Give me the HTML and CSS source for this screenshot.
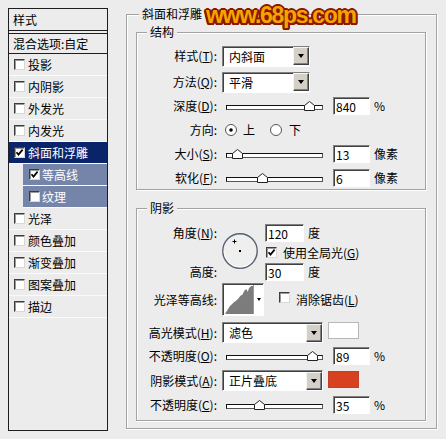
FILE: index.html
```html
<!DOCTYPE html>
<html lang="zh-CN">
<head>
<meta charset="utf-8">
<title>图层样式 - 斜面和浮雕</title>
<link rel="stylesheet" href="styles.css">
</head>
<body>
<div class="dialog">
  <div class="styles">
    <div class="styles-head">样式</div>
    <div class="blend">混合选项:自定</div>
    <div class="item"><span class="cb"></span>投影</div>
    <div class="item"><span class="cb"></span>内阴影</div>
    <div class="item"><span class="cb"></span>外发光</div>
    <div class="item"><span class="cb"></span>内发光</div>
    <div class="item sel"><span class="cb"><svg viewBox="0 0 9 9" class="chk"><polyline points="1.5,4.2 3.5,6.6 7.6,1.6"/></svg></span>斜面和浮雕</div>
    <div class="item sub"><span class="cb"><svg viewBox="0 0 9 9" class="chk"><polyline points="1.5,4.2 3.5,6.6 7.6,1.6"/></svg></span>等高线</div>
    <div class="item sub"><span class="cb"></span>纹理</div>
    <div class="item"><span class="cb"></span>光泽</div>
    <div class="item"><span class="cb"></span>颜色叠加</div>
    <div class="item"><span class="cb"></span>渐变叠加</div>
    <div class="item"><span class="cb"></span>图案叠加</div>
    <div class="item"><span class="cb"></span>描边</div>
  </div>

  <fieldset class="group outer">
    <legend>斜面和浮雕</legend>

    <fieldset class="group inner struct">
      <legend>结构</legend>
      <div class="row">
        <span class="lbl">样式(<u>T</u>):</span>
        <div class="select w88"><span class="val">内斜面</span><span class="btn"><i class="tri"></i></span></div>
      </div>
      <div class="row gap4">
        <span class="lbl">方法(<u>Q</u>):</span>
        <div class="select w88"><span class="val">平滑</span><span class="btn"><i class="tri"></i></span></div>
      </div>
      <div class="row">
        <span class="lbl">深度(<u>D</u>):</span>
        <div class="slider"><span class="track"></span><svg class="thumb" style="left:78px" viewBox="0 0 11 10"><path d="M0.5,9.5V4.5L5.5,0.5L10.5,4.5V9.5Z"/></svg></div>
        <span class="num">840</span><span class="unit">%</span>
      </div>
      <div class="row">
        <span class="lbl">方向:</span>
        <svg class="radio first" viewBox="0 0 12 12"><circle cx="6" cy="6" r="5.5" class="ring"/><circle cx="6" cy="6" r="1.8" class="dot"/></svg><span>上</span>
        <svg class="radio second" viewBox="0 0 12 12"><circle cx="6" cy="6" r="5.5" class="ring"/></svg><span>下</span>
      </div>
      <div class="row">
        <span class="lbl">大小(<u>S</u>):</span>
        <div class="slider"><span class="track"></span><svg class="thumb" style="left:6px" viewBox="0 0 11 10"><path d="M0.5,9.5V4.5L5.5,0.5L10.5,4.5V9.5Z"/></svg></div>
        <span class="num">13</span><span class="unit">像素</span>
      </div>
      <div class="row">
        <span class="lbl">软化(<u>F</u>):</span>
        <div class="slider"><span class="track"></span><svg class="thumb" style="left:31px" viewBox="0 0 11 10"><path d="M0.5,9.5V4.5L5.5,0.5L10.5,4.5V9.5Z"/></svg></div>
        <span class="num">6</span><span class="unit">像素</span>
      </div>
    </fieldset>

    <fieldset class="group inner shadow">
      <legend>阴影</legend>
      <div class="angle">
        <span class="lbl a-lbl">角度(<u>N</u>):</span>
        <svg class="dial" viewBox="0 0 36 36">
          <circle cx="18" cy="18" r="17.2" class="dial-ring"/>
          <circle cx="18" cy="18" r="16" class="dial-hi"/>
          <rect x="17" y="17" width="2" height="2"/>
          <path d="M12.5,6.5V10.5M10.5,8.5H14.5" class="cross"/>
        </svg>
        <div class="a-val"><span class="num w39">120</span><span class="unit">度</span></div>
        <div class="a-glob"><span class="cb"><svg viewBox="0 0 9 9" class="chk"><polyline points="1.5,4.2 3.5,6.6 7.6,1.6"/></svg></span><span>使用全局光(<u>G</u>)</span></div>
        <span class="lbl h-lbl">高度:</span>
        <div class="h-val"><span class="num w39">30</span><span class="unit">度</span></div>
      </div>
      <div class="row contour-row">
        <span class="lbl">光泽等高线:</span>
        <div class="contour">
          <svg class="curve" viewBox="0 0 29 29" preserveAspectRatio="none"><path d="M0,29L5,21L9,17L13,14L16,10L18,9L20,5L22,3L23.5,6L25,2L27,0L29,0L29,29Z"/></svg>
          <span class="c-btn"><i class="tri"></i></span>
        </div>
        <span class="cb aa"></span><span>消除锯齿(<u>L</u>)</span>
      </div>
      <div class="row top gap6">
        <span class="lbl">高光模式(<u>H</u>):</span>
        <div class="select w101"><span class="val">滤色</span><span class="btn"><i class="tri"></i></span></div>
        <span class="swatch white"></span>
      </div>
      <div class="row short gap2">
        <span class="lbl">不透明度(<u>O</u>):</span>
        <div class="slider"><span class="track"></span><svg class="thumb" style="left:81px" viewBox="0 0 11 10"><path d="M0.5,9.5V4.5L5.5,0.5L10.5,4.5V9.5Z"/></svg></div>
        <span class="num">89</span><span class="unit">%</span>
      </div>
      <div class="row top gap4">
        <span class="lbl">阴影模式(<u>A</u>):</span>
        <div class="select w101"><span class="val">正片叠底</span><span class="btn"><i class="tri"></i></span></div>
        <span class="swatch red"></span>
      </div>
      <div class="row short gap3">
        <span class="lbl">不透明度(<u>C</u>):</span>
        <div class="slider"><span class="track"></span><svg class="thumb" style="left:28px" viewBox="0 0 11 10"><path d="M0.5,9.5V4.5L5.5,0.5L10.5,4.5V9.5Z"/></svg></div>
        <span class="num">35</span><span class="unit">%</span>
      </div>
    </fieldset>
  </fieldset>
</div>
<div class="watermark">www.68ps.com</div>
</body>
</html>
```

FILE: styles.css
```css
* { box-sizing: border-box; }
html, body { margin: 0; padding: 0; }
body {
  width: 446px;
  height: 439px;
  background: #ececec;
  font: 12px/14px "Noto Sans CJK SC", "Noto Sans", sans-serif;
  color: #000;
  position: relative;
  overflow: hidden;
}
u { text-decoration: underline; text-underline-offset: 1px; }

.dialog { display: flex; align-items: flex-start; }

/* left style list */
.styles {
  margin: 8px 0 0 8px;
  width: 100px;
  height: 423px;
  border: 1px solid #1e1e1e;
  background: #ececec;
  flex: none;
}
.styles-head {
  height: 22px;
  border-bottom: 1px solid #1e1e1e;
  padding-left: 4px;
  display: flex;
  align-items: center;
}
.blend {
  margin-top: 2px;
  height: 21px;
  border-top: 1px solid #1e1e1e;
  border-bottom: 1px solid #1e1e1e;
  padding-left: 4px;
  display: flex;
  align-items: center;
}
.item {
  height: 22px;
  border-bottom: 1px solid #fafafa;
  padding-left: 5px;
  display: flex;
  align-items: center;
}
.item.sel { background: #0a246a; color: #fff; }
.item.sub { margin-left: 14px; padding-left: 6px; background: #7585a9; color: #fff; }
.item.sub .cb { margin-right: 2px; }

.cb {
  width: 11px;
  height: 11px;
  flex: none;
  background: #fff;
  border: 1px solid;
  border-color: #3c3c3c #d8d8d8 #d8d8d8 #3c3c3c;
  box-shadow: inset 1px 1px 0 #9a9a9a;
  margin-right: 3px;
  display: flex;
  align-items: center;
  justify-content: center;
}
.chk { width: 9px; height: 9px; display: block; }
.chk polyline { fill: none; stroke: #000; stroke-width: 1.7; }

/* group boxes */
.group {
  border: 1px solid #a2a2a2;
  box-shadow: inset 1px 1px 0 #fff, 1px 1px 0 #fff;
  margin: 0;
  padding: 0;
  min-width: 0;
}
.group > legend {
  padding: 0 3px;
  line-height: 14px;
  height: 14px;
  background: #ececec;
}
.outer {
  margin: 7px 0 0 18px;
  width: 311px;
  padding: 4px 10px 7px 9px;
  flex: none;
}
.outer > legend { margin-left: 3px; }
.inner { width: 290px; }
.inner > legend { margin-left: 10px; }
.struct { padding: 6px 0 0 0; }
.shadow { margin-top: 11px; padding: 8px 0 5px 0; }

/* rows */
.row { display: flex; align-items: center; height: 22px; }
.struct .row + .row { margin-top: 2px; }
.struct .row.gap4 { margin-top: 4px; }
.row.short { height: 20px; }
.row.gap2 { margin-top: 2px; }
.row.gap3 { margin-top: 3px; }
.row.gap4 { margin-top: 4px; }
.row.gap6 { margin-top: 6px; }
.lbl {
  width: 80px;
  margin-right: 5px;
  text-align: right;
  white-space: nowrap;
  flex: none;
}

/* dropdown */
.select {
  height: 21px;
  border: 1px solid;
  border-color: #808080 #fff #fff #808080;
  box-shadow: inset 1px 1px 0 #404040;
  background: #fff;
  display: flex;
  align-items: center;
  padding: 1px 0 0 6px;
  flex: none;
}
.select.w88 { width: 88px; }
.select.w101 { width: 101px; }
.select .val { flex: 1; }
.select .btn {
  width: 16px;
  height: 18px;
  margin-top: -1px;
  background: #d4d0c8;
  border: 1px solid;
  border-color: #f4f4f4 #404040 #404040 #f4f4f4;
  box-shadow: inset -1px -1px 0 #808080;
  display: flex;
  align-items: center;
  justify-content: center;
  flex: none;
}
.tri {
  display: block;
  width: 0;
  height: 0;
  border-left: 3.5px solid transparent;
  border-right: 3.5px solid transparent;
  border-top: 4px solid #000;
}

/* slider */
.slider {
  position: relative;
  width: 97px;
  height: 11px;
  margin-left: 4px;
  margin-right: 10px;
  flex: none;
}
.track {
  position: absolute;
  left: 0;
  right: 0;
  top: 4px;
  height: 5px;
  background: #fff;
  border: 1px solid #555;
  border-top-color: #111;
  border-left-color: #111;
}
.thumb {
  position: absolute;
  top: 0;
  width: 11px;
  height: 10px;
}
.thumb path { fill: #fff; stroke: #222; stroke-width: 1; }

/* numeric field */
.num {
  width: 37px;
  height: 18px;
  border: 1px solid;
  border-color: #808080 #fff #fff #808080;
  box-shadow: inset 1px 1px 0 #404040;
  background: #fff;
  padding: 1px 0 0 2px;
  line-height: 15px;
  flex: none;
}
.num.w39 { width: 39px; }
.unit { margin-left: 4px; }

/* radio */
.radio { width: 12px; height: 12px; flex: none; }
.radio.first { margin-left: 3px; margin-right: 6px; }
.radio.second { margin-left: 15px; margin-right: 7px; }
.radio .ring { fill: #fff; stroke: #555; stroke-width: 1; }
.radio .dot { fill: #000; }

/* angle block */
.angle {
  display: grid;
  grid-template-columns: 80px 38px auto;
  grid-template-rows: 20px 17px 20px;
  column-gap: 5px;
  row-gap: 1px;
  align-items: center;
}
.a-lbl { grid-column: 1; grid-row: 1; margin-right: 0; }
.h-lbl { grid-column: 1; grid-row: 3; margin-right: 0; }
.dial {
  grid-column: 2;
  grid-row: 1 / 4;
  align-self: start;
  margin-top: 10px;
  width: 36px;
  height: 36px;
}
.dial-ring { fill: #efefef; stroke: #566073; stroke-width: 1.4; }
.dial-hi { fill: none; stroke: #fff; stroke-width: 0.8; stroke-dasharray: 40 200; stroke-dashoffset: -10; }
.cross { stroke: #000; stroke-width: 1; fill: none; }
.a-val, .h-val, .a-glob { display: flex; align-items: center; grid-column: 3; }
.a-val { grid-row: 1; }
.a-glob { grid-row: 2; padding-left: 1px; }
.a-glob .cb { margin-right: 6px; }
.h-val { grid-row: 3; }

/* contour */
.contour-row { height: 33px; margin-top: 1px; }
.contour {
  width: 42px;
  height: 33px;
  border: 1px solid;
  border-color: #808080 #fff #fff #808080;
  box-shadow: inset 1px 1px 0 #404040;
  background: #fff;
  display: flex;
  padding: 2px 0 1px 2px;
  flex: none;
}
.curve { width: 28px; height: 28px; display: block; }
.curve path { fill: #7c7c7c; }
.c-btn {
  margin-left: auto;
  width: 10px;
  border-left: 1px solid #9a9a9a;
  margin-top: -1px;
  display: flex;
  align-items: center;
  justify-content: center;
}
.c-btn .tri { border-left-width: 2.5px; border-right-width: 2.5px; border-top-width: 3px; }
.cb.aa { margin-left: 15px; margin-right: 6px; margin-top: -4px; }

.row.top { align-items: flex-start; }
.row.top .lbl { align-self: center; }
.swatch {
  width: 31px;
  height: 17px;
  margin-left: 5px;
  flex: none;
  border: 1px solid #b8b8b8;
}
.swatch.white { background: #fff; }
.swatch.red { background: #d8401f; border-color: #c04030; margin-top: 1px; }

/* watermark over the dialog */
.watermark {
  position: absolute;
  left: 206px;
  top: 3px;
  font: bold 23px/25px "Liberation Sans", Arial, sans-serif;
  letter-spacing: -1.3px;
  color: #f6a400;
  white-space: nowrap;
  text-shadow:
    2px 0 0 #8a1800, -2px 0 0 #8a1800, 0 2px 0 #8a1800, 0 -2px 0 #8a1800,
    1.5px 1.5px 0 #8a1800, -1.5px 1.5px 0 #8a1800, 1.5px -1.5px 0 #8a1800, -1.5px -1.5px 0 #8a1800,
    1px 2px 0 #8a1800, -1px 2px 0 #8a1800, 2px 1px 0 #8a1800, -2px 1px 0 #8a1800;
}
```
